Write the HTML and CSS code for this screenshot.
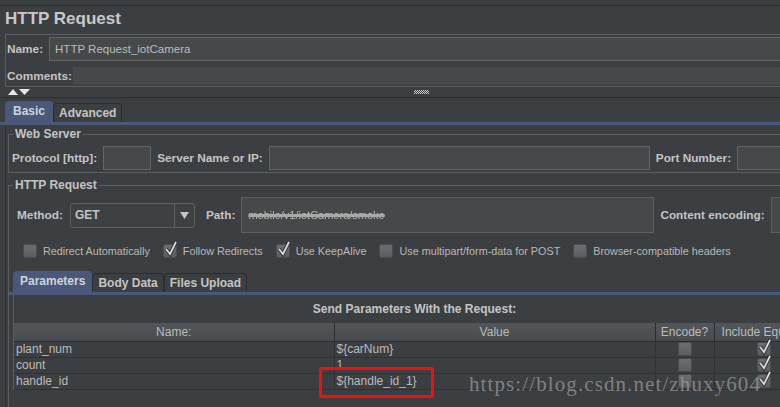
FILE: index.html
```html
<!DOCTYPE html>
<html lang="en">
<head>
  <meta charset="UTF-8">
  <title>HTTP Request</title>
  <link rel="stylesheet" href="styles.css">
</head>
<body>
  <div class="page">
    <div class="title">HTTP Request</div>

    <div class="name-panel">
      <div class="name-row">
        <span class="label">Name:</span>
        <div class="field name-field">HTTP Request_iotCamera</div>
      </div>
      <div class="comments-row">
        <span class="label">Comments:</span>
        <div class="comments-field"></div>
      </div>
    </div>

    <div class="splitter">
      <svg class="arrows" width="24" height="7" viewBox="0 0 24 7">
        <polygon points="1,6 6,0 11,6" fill="#e6e6e6"/>
        <polygon points="12,0 23,0 17.5,6" fill="#e6e6e6"/>
      </svg>
      <span class="grip"></span>
    </div>

    <div class="tabs main-tabs">
      <span class="tab active">Basic</span>
      <span class="tab">Advanced</span>
    </div>

    <div class="tab-body">
      <fieldset class="group web-server">
        <legend>Web Server</legend>
        <div class="server-row">
          <span class="label">Protocol [http]:</span>
          <div class="field protocol"></div>
          <span class="label">Server Name or IP:</span>
          <div class="field server"></div>
          <span class="label">Port Number:</span>
          <div class="field port"></div>
        </div>
      </fieldset>

      <fieldset class="group http-req">
        <legend>HTTP Request</legend>
        <div class="method-row">
          <span class="label">Method:</span>
          <div class="select">
            <span class="select-value">GET</span>
            <span class="select-btn">
              <svg width="9" height="7" viewBox="0 0 9 7"><polygon points="0,0 9,0 4.5,7" fill="#c4c4c4"/></svg>
            </span>
          </div>
          <span class="label path-label">Path:</span>
          <div class="field path"><span class="smudge">mobile/v1/iotCamera/smoke</span></div>
          <span class="label enc-label">Content encoding:</span>
          <div class="field encoding"></div>
        </div>

        <div class="checks">
          <span class="check"><span class="box"></span>Redirect Automatically</span>
          <span class="check"><span class="box checked"><svg width="16" height="16" viewBox="0 0 16 16"><path d="M3 8 L7 13 L13 1" fill="none" stroke="#2a2a2a" stroke-width="3.6"/><path d="M3 8 L7 13 L13 1" fill="none" stroke="#dcdcdc" stroke-width="1.8"/></svg></span>Follow Redirects</span>
          <span class="check"><span class="box checked"><svg width="16" height="16" viewBox="0 0 16 16"><path d="M3 8 L7 13 L13 1" fill="none" stroke="#2a2a2a" stroke-width="3.6"/><path d="M3 8 L7 13 L13 1" fill="none" stroke="#dcdcdc" stroke-width="1.8"/></svg></span>Use KeepAlive</span>
          <span class="check"><span class="box"></span>Use multipart/form-data for POST</span>
          <span class="check"><span class="box"></span>Browser-compatible headers</span>
        </div>

        <div class="tabs param-tabs">
          <span class="tab active">Parameters</span>
          <span class="tab">Body Data</span>
          <span class="tab">Files Upload</span>
        </div>

        <div class="param-body">
          <div class="param-title">Send Parameters With the Request:</div>
          <table class="params">
            <thead>
              <tr>
                <th class="col-name">Name:</th>
                <th class="col-value">Value</th>
                <th class="col-encode">Encode?</th>
                <th>Include Equals?</th>
              </tr>
            </thead>
            <tbody>
              <tr>
                <td>plant_num</td>
                <td>${carNum}</td>
                <td class="center"><span class="box"></span></td>
                <td class="center"><span class="box checked"><svg width="16" height="16" viewBox="0 0 16 16"><path d="M3 8 L7 13 L13 1" fill="none" stroke="#2a2a2a" stroke-width="3.6"/><path d="M3 8 L7 13 L13 1" fill="none" stroke="#dcdcdc" stroke-width="1.8"/></svg></span></td>
              </tr>
              <tr>
                <td>count</td>
                <td>1</td>
                <td class="center"><span class="box"></span></td>
                <td class="center"><span class="box checked"><svg width="16" height="16" viewBox="0 0 16 16"><path d="M3 8 L7 13 L13 1" fill="none" stroke="#2a2a2a" stroke-width="3.6"/><path d="M3 8 L7 13 L13 1" fill="none" stroke="#dcdcdc" stroke-width="1.8"/></svg></span></td>
              </tr>
              <tr>
                <td>handle_id</td>
                <td>${handle_id_1}</td>
                <td class="center"><span class="box"></span></td>
                <td class="center"><span class="box checked"><svg width="16" height="16" viewBox="0 0 16 16"><path d="M3 8 L7 13 L13 1" fill="none" stroke="#2a2a2a" stroke-width="3.6"/><path d="M3 8 L7 13 L13 1" fill="none" stroke="#dcdcdc" stroke-width="1.8"/></svg></span></td>
              </tr>
            </tbody>
          </table>
        </div>
      </fieldset>
    </div>

    <!-- annotation + watermark lie over the table -->
    <div class="highlight"></div>
    <div class="watermark">https://blog.csdn.net/zhuxy604</div>
  </div>
</body>
</html>
```

FILE: styles.css
```css
* {
  box-sizing: border-box;
  margin: 0;
  padding: 0;
}

body {
  background-color: #3c3f41;
  color: #bbbbbb;
  font-family: "Liberation Sans", Arial, sans-serif;
  font-size: 12px;
  overflow: hidden;
}

.page {
  position: relative;
  width: 815px;
  height: 407px;
  padding-top: 5px;
}

.label {
  font-size: 11.8px;
  font-weight: bold;
  color: #c4c4c4;
  white-space: nowrap;
}

.field {
  background-color: #45494a;
  border: 1px solid #646464;
}

/* title + name/comments */
.title {
  height: 29px;
  border-top: 1px solid #2b2d2e;
  padding: 3px 0 0 5px;
  font-size: 17px;
  font-weight: bold;
  line-height: 20px;
  color: #c8c8c8;
}

.name-panel {
  height: 53px;
  margin-left: 5px;
  padding: 2px 0 0 1px;
  border: 1px solid #5a5d5f;
  border-right: none;
}

.name-row {
  display: flex;
  align-items: center;
  gap: 6px;
  height: 24px;
}

.name-field {
  flex: 1;
  height: 24px;
  padding-left: 5px;
  line-height: 22px;
  font-size: 11.5px;
}

.comments-row {
  display: flex;
  align-items: center;
  height: 18px;
  margin-top: 6px;
}

.comments-field {
  flex: 1;
  height: 18px;
  margin-left: 1px;
  background-color: #45494a;
}

.splitter {
  display: flex;
  align-items: center;
  height: 11px;
  border-bottom: 1px solid #2b2d2e;
}

.arrows {
  margin-left: 7px;
}

.grip {
  width: 15px;
  height: 4px;
  margin-left: 383px;
  background: repeating-conic-gradient(#d0d0d0 0 25%, transparent 0 50%) 0 0 / 2px 2px;
}

/* tabs */
.tabs {
  display: flex;
  align-items: flex-end;
  border-bottom: 3px solid #4a5879;
}

.main-tabs {
  height: 27px;
  padding-left: 5px;
}

.tab {
  height: 19px;
  padding: 0 5px;
  border: 1px solid #2b2d2f;
  border-bottom: none;
  border-radius: 4px 4px 0 0;
  font-weight: bold;
  line-height: 19px;
  color: #c4c4c4;
}

.tab.active {
  height: 21px;
  padding: 0 6px;
  border-color: #4a5879;
  background-color: #4a5879;
  line-height: 18px;
  color: #cfd3da;
}

.main-tabs .tab.active {
  padding: 0 7px;
}

.tab-body {
  margin-left: 5px;
  border-left: 1px solid #2e3032;
}

/* group boxes */
.group {
  margin-left: 2px;
  border: 1px solid #5b5e60;
  border-right: none;
}

.group legend {
  margin-left: 4px;
  padding: 0 2px;
  font-weight: bold;
  line-height: 14px;
  color: #c4c4c4;
}

.web-server {
  margin-top: 2px;
}

.server-row {
  display: flex;
  align-items: center;
  gap: 6px;
  padding: 5px 0 2px 3px;
}

.field.protocol {
  width: 48px;
  height: 24px;
}

.field.server {
  width: 381px;
  height: 24px;
}

.field.port {
  flex: 1;
  height: 24px;
}

.http-req {
  margin-top: 5px;
  padding-bottom: 40px;
}

.method-row {
  display: flex;
  align-items: center;
  height: 36px;
  margin-top: 5px;
  padding-left: 8px;
}

.select {
  display: flex;
  width: 125px;
  height: 25px;
  margin-left: 7px;
  border: 1px solid #5e6060;
  border-radius: 3px;
  background-color: #3e4143;
}

.select-value {
  flex: 1;
  padding-left: 4px;
  line-height: 22px;
  font-weight: bold;
  color: #c4c4c4;
}

.select-btn {
  display: flex;
  align-items: center;
  justify-content: center;
  width: 20px;
  border-left: 1px solid #5e6060;
}

.path-label {
  margin: 0 6px 0 11px;
}

.field.path {
  width: 413px;
  height: 36px;
  padding-left: 6px;
  border-color: #5e6060;
  line-height: 34px;
}

.smudge {
  font-size: 11px;
  color: #b8b8b8;
  text-decoration: line-through;
  text-decoration-thickness: 3px;
  text-decoration-color: #a8a8a8;
  filter: blur(0.7px);
}

.enc-label {
  margin: 0 6px;
}

.field.encoding {
  flex: 1;
  height: 36px;
  border-color: #5e6060;
}

/* checkbox row */
.checks {
  display: flex;
  align-items: center;
  height: 19px;
  margin-top: 8px;
  padding-left: 14px;
}

.check {
  display: flex;
  align-items: center;
  gap: 6px;
  margin-right: 13px;
  font-size: 10.8px;
  color: #b8b8b8;
  white-space: nowrap;
}

.box {
  position: relative;
  display: inline-block;
  width: 14px;
  height: 14px;
  border: 1px solid #4a4c4e;
  border-radius: 2px;
  background: linear-gradient(#6c6f72, #5b5e61);
  vertical-align: middle;
}

.box svg {
  position: absolute;
  left: -1px;
  top: -4px;
}

/* parameters */
.param-tabs {
  height: 24px;
  margin-top: 11px;
  padding-left: 4px;
}

.param-body {
  margin-left: 4px;
  border-left: 1px solid #5b5e60;
}

.param-title {
  height: 28px;
  line-height: 28px;
  text-align: center;
  font-weight: bold;
  color: #c4c4c4;
}

.params {
  width: 100%;
  border-collapse: collapse;
  table-layout: fixed;
}

.params th {
  height: 18px;
  padding: 0;
  border-right: 1px solid #2b2d2f;
  border-bottom: 1px solid #2b2d2f;
  background: linear-gradient(#53575a, #474b4d);
  font-weight: normal;
  color: #bbbbbb;
  white-space: nowrap;
  overflow: hidden;
}

.params .col-name { width: 320px; }
.params .col-value { width: 321px; }
.params .col-encode { width: 59px; }

.params td {
  height: 16px;
  padding: 0 0 0 2px;
  border-right: 1px solid #2f3133;
  border-bottom: 1px solid #2f3133;
  line-height: 15px;
  color: #bbbbbb;
  white-space: nowrap;
}

.params td.center {
  padding: 0;
  text-align: center;
}

.params td .box {
  width: 14px;
  height: 14px;
  vertical-align: top;
}

/* overlays */
.highlight {
  position: absolute;
  left: 319px;
  top: 367px;
  width: 115px;
  height: 31px;
  border: 3px solid #f0100f;
  border-radius: 2px;
}

.watermark {
  position: absolute;
  left: 469px;
  top: 372px;
  font-family: "Liberation Serif", serif;
  font-size: 21px;
  letter-spacing: 1.1px;
  color: rgba(160, 160, 160, 0.7);
  white-space: nowrap;
}
```
